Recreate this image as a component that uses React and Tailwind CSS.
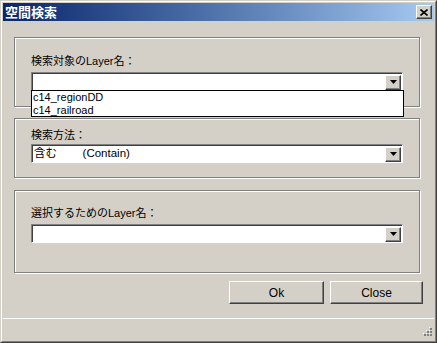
import React from 'react';

const font = { fontFamily: '"Liberation Sans", "Noto Sans CJK JP", sans-serif' };

function Arrow() {
  return (
    <div className="w-[16px] h-[15px] bg-[#d4d0c8] border border-t-white border-l-white border-r-[#404040] border-b-[#404040] shadow-[inset_-1px_-1px_0_#808080] flex items-center justify-center">
      <svg width="7" height="4" viewBox="0 0 7 4">
        <path d="M0 0h7L3.5 4z" fill="#000" />
      </svg>
    </div>
  );
}

function Combo({ text }) {
  return (
    <div className="h-[19px] bg-white border border-t-[#808080] border-l-[#808080] border-r-white border-b-white shadow-[inset_1px_1px_0_#404040] flex items-center pl-[2px] pr-[1px] pt-[1px]">
      <span className="flex-1 text-[11.5px] text-black whitespace-pre leading-none">{text}</span>
      <Arrow />
    </div>
  );
}

function Group({ className, children }) {
  return (
    <div className={`mx-[11px] mr-[14px] border border-[#808080] shadow-[inset_1px_1px_0_#fff,1px_1px_0_#fff] px-[16px] ${className}`}>
      {children}
    </div>
  );
}

export default function App() {
  return (
    <div style={font} className="w-[437px] h-[343px] bg-[#d4d0c8] border border-t-[#d4d0c8] border-l-[#d4d0c8] border-r-[#404040] border-b-[#404040]">
      <div className="h-full border border-t-white border-l-white border-r-[#808080] border-b-[#808080] p-[1px] flex flex-col">
        <div className="h-[18px] bg-gradient-to-r from-[#0a246a] to-[#a6caf0] flex items-center justify-between pl-[2px] pr-[2px]">
          <span className="text-white font-bold text-[13px] leading-none">空間検索</span>
          <div className="w-[16px] h-[14px] bg-[#d4d0c8] border border-t-white border-l-white border-r-[#404040] border-b-[#404040] shadow-[inset_-1px_-1px_0_#808080] flex items-center justify-center">
            <svg width="8" height="7" viewBox="0 0 8 7">
              <path d="M0.5 0.5L7.5 6.5M7.5 0.5L0.5 6.5" stroke="#000" strokeWidth="1.6" />
            </svg>
          </div>
        </div>

        <div className="flex-1 flex flex-col relative">
          <Group className="mt-[16px] h-[70px] pt-[17px]">
            <div className="text-[11px] leading-[13px] text-black">検索対象のLayer名：</div>
            <div className="mt-[4px] relative">
              <Combo text="" />
              <div className="absolute left-0 right-[-1px] top-[18px] h-[27px] bg-white border border-black z-10 text-[11px] leading-[12.5px] text-black pl-[1px]">
                <div>c14_regionDD</div>
                <div>c14_railroad</div>
              </div>
            </div>
          </Group>

          <Group className="mt-[11px] h-[60px] pt-[10px]">
            <div className="text-[11px] leading-[13px] text-black">検索方法：</div>
            <div className="mt-[2px]">
              <Combo text={'含む        (Contain)'} />
            </div>
          </Group>

          <Group className="mt-[12px] h-[83px] pt-[16px]">
            <div className="text-[11px] leading-[13px] text-black">選択するためのLayer名：</div>
            <div className="mt-[4px]">
              <Combo text="" />
            </div>
          </Group>

          <div className="mt-[8px] flex justify-end gap-[6px] pr-[11px]">
            <button className="w-[95px] h-[23px] bg-[#d4d0c8] border border-t-white border-l-white border-r-[#404040] border-b-[#404040] shadow-[inset_-1px_-1px_0_#808080] text-[12px] text-black">Ok</button>
            <button className="w-[93px] h-[23px] bg-[#d4d0c8] border border-t-white border-l-white border-r-[#404040] border-b-[#404040] shadow-[inset_-1px_-1px_0_#808080] text-[12px] text-black">Close</button>
          </div>

          <div className="mt-auto h-[22px] border-t border-white flex items-end justify-end pr-[1px] pb-[1px]">
            <svg width="12" height="12" viewBox="0 0 12 12">
              <g fill="#808080">
                <rect x="9" y="1" width="2" height="2" />
                <rect x="6" y="4" width="2" height="2" />
                <rect x="9" y="4" width="2" height="2" />
                <rect x="3" y="7" width="2" height="2" />
                <rect x="6" y="7" width="2" height="2" />
                <rect x="9" y="7" width="2" height="2" />
              </g>
              <g fill="#fff">
                <rect x="8" y="0" width="1" height="1" />
                <rect x="5" y="3" width="1" height="1" />
                <rect x="8" y="3" width="1" height="1" />
                <rect x="2" y="6" width="1" height="1" />
                <rect x="5" y="6" width="1" height="1" />
                <rect x="8" y="6" width="1" height="1" />
              </g>
            </svg>
          </div>
        </div>
      </div>
    </div>
  );
}
